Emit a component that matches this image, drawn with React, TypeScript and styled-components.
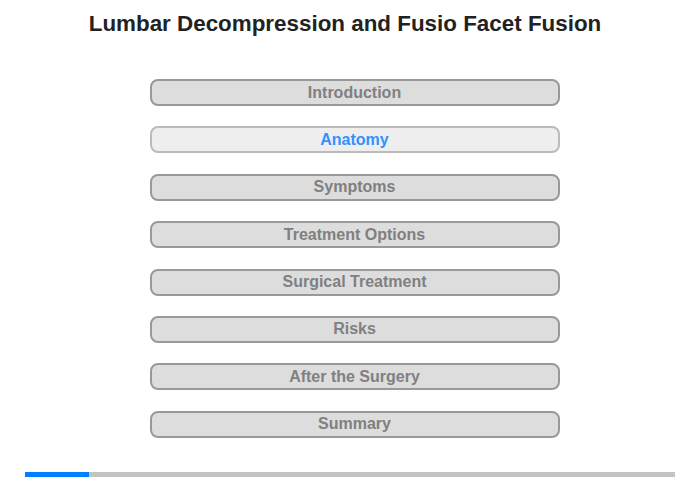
import React from 'react';
import styled, {createGlobalStyle} from 'styled-components';

const GlobalStyle = createGlobalStyle`
  body {
    margin: 0;
    background: #fff;
    font-family: 'Liberation Sans', Arial, sans-serif;
  }
`;

const Page = styled.div`
  width: 700px;
  height: 480px;
  display: flex;
  flex-direction: column;
  align-items: center;
  box-sizing: border-box;
  padding-top: 11px;
`;

const Title = styled.h1`
  font-size: 22.4px;
  font-weight: 700;
  color: #222;
  margin: 0 10px 42px 0;
  line-height: 26px;
`;

const Menu = styled.nav`
  display: flex;
  flex-direction: column;
  gap: 20.4px;
  width: 410px;
  margin-left: 9px;
`;

const MenuButton = styled.button<{$active?: boolean}>`
  height: 27px;
  border-radius: 8px;
  border: 2px solid ${(p) => (p.$active ? '#bbb' : '#999')};
  background: ${(p) => (p.$active ? '#eee' : '#ddd')};
  color: ${(p) => (p.$active ? '#3391ff' : '#808080')};
  font-family: 'Liberation Sans', Arial, sans-serif;
  font-size: 16px;
  font-weight: 700;
  padding: 0;
  cursor: pointer;
`;

const Progress = styled.div`
  margin-top: auto;
  margin-bottom: 3px;
  width: 650px;
  height: 5px;
  background: #c4c4c4;
  display: flex;
`;

const ProgressFill = styled.div`
  height: 100%;
  background: #0080ff;
`;

const items = [
  'Introduction',
  'Anatomy',
  'Symptoms',
  'Treatment Options',
  'Surgical Treatment',
  'Risks',
  'After the Surgery',
  'Summary',
];

export default function App() {
  const current = 1;
  return (
    <>
      <GlobalStyle />
      <Page>
        <Title>Lumbar Decompression and Fusio Facet Fusion</Title>
        <Menu>
          {items.map((label, i) => (
            <MenuButton key={label} $active={i === current}>
              {label}
            </MenuButton>
          ))}
        </Menu>
        <Progress>
          <ProgressFill style={{width: `${(64 / 650) * 100}%`}} />
        </Progress>
      </Page>
    </>
  );
}
